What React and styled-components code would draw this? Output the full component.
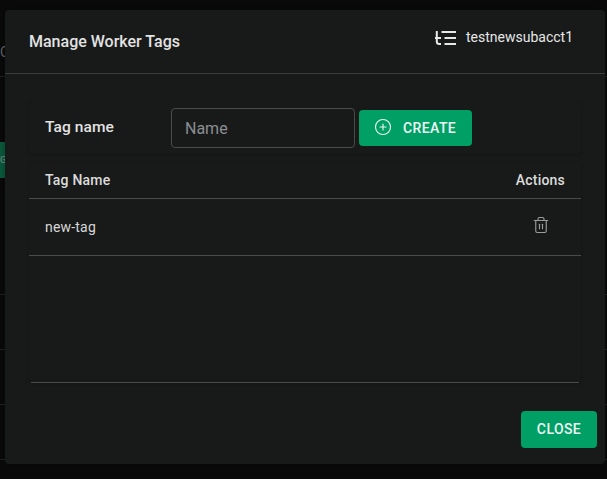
import React from "react";
import styled, { createGlobalStyle } from "styled-components";
import { Trash2, CirclePlus } from "lucide-react";

const Global = createGlobalStyle`
  html, body { margin: 0; padding: 0; background: #0a0a0a; }
  body { font-family: Roboto, "Liberation Sans", sans-serif; overflow: hidden; }
`;

const Page = styled.div`
  position: relative;
  width: 607px;
  height: 479px;
  overflow: hidden;
  background: #0a0a0a;
`;

const Backdrop = styled.div`
  display: flex;
  flex-direction: column;
  height: 100%;
  padding-top: 40px;
  box-sizing: border-box;
`;

const BackHeading = styled.div`
  height: 37px;
  box-sizing: border-box;
  border-bottom: 1px solid #232525;
  color: #6a6c6c;
  font-size: 14px;
  line-height: 24px;
  white-space: nowrap;
`;

const BackToolbar = styled.div`
  display: flex;
  padding-top: 65px;
  height: 218px;
  box-sizing: border-box;
  border-bottom: 1px solid #232525;
`;

const BackButton = styled.div`
  width: 5px;
  height: 36px;
  background: #0b5f41;
  color: #6f8f82;
  font-size: 9px;
  font-weight: 500;
  line-height: 36px;
  overflow: hidden;
`;

const BackRow = styled.div`
  flex: none;
  height: 55px;
  box-sizing: border-box;
  border-bottom: 1px solid #232525;
`;

const Modal = styled.div`
  position: absolute;
  left: 5px;
  top: 10px;
  width: 600px;
  height: 454px;
  background: #181a1a;
  border-radius: 4px;
  display: flex;
  flex-direction: column;
  box-shadow: 0 0 12px rgba(0, 0, 0, 0.4);
`;

const Header = styled.header`
  flex: none;
  height: 64px;
  box-sizing: border-box;
  border-bottom: 1px solid #3a3c3c;
  display: flex;
  justify-content: space-between;
  padding: 0 32px 0 24px;
`;

const Title = styled.h2`
  margin: 0;
  font-size: 16px;
  font-weight: 500;
  line-height: 63px;
  color: #e2e2e2;
`;

const Account = styled.div`
  display: flex;
  align-items: center;
  gap: 10px;
  height: 55px;
  color: #e6e6e6;
  font-size: 14px;
  font-weight: 400;
`;

const AccountName = styled.span`
  line-height: 20px;
  margin-top: -1px;
`;

const Body = styled.div`
  flex: 1;
  display: flex;
  flex-direction: column;
  gap: 8px;
  padding: 28px 24px 0;
`;

const FormCard = styled.div`
  flex: none;
  height: 52px;
  box-sizing: border-box;
  border-radius: 4px;
  background: #181a1a;
  box-shadow: 0 1px 3px rgba(0, 0, 0, 0.25);
  display: flex;
  align-items: center;
  padding: 0 16px;
`;

const FieldLabel = styled.label`
  width: 126px;
  flex: none;
  font-size: 15.5px;
  font-weight: 500;
  letter-spacing: 0.1px;
  color: #e2e2e2;
  position: relative;
  top: -1px;
`;

const NameInput = styled.input`
  width: 184px;
  height: 40px;
  box-sizing: border-box;
  background: transparent;
  border: 1px solid #4a4c4c;
  border-radius: 4px;
  padding: 0 13px;
  font-family: inherit;
  font-size: 16px;
  color: #e8e8e8;
  outline: none;
  &::placeholder { color: #8b8e92; opacity: 1; }
`;

const GreenButton = styled.button`
  border: none;
  border-radius: 4px;
  background: #009f65;
  color: #eef8f4;
  font-family: inherit;
  font-size: 14px;
  font-weight: 500;
  letter-spacing: 0.4px;
  display: inline-flex;
  align-items: center;
  padding: 0;
`;

const CreateButton = styled(GreenButton)`
  width: 113px;
  height: 36px;
  margin-left: 4px;
  padding-left: 15px;
  gap: 11px;
`;

const CreateIcon = styled(CirclePlus)`
  margin-top: -3px;
`;

const CloseButton = styled(GreenButton)`
  width: 76px;
  height: 37px;
  justify-content: center;
  padding-bottom: 2px;
`;

const TableCard = styled.div`
  flex: none;
  height: 221px;
  box-sizing: border-box;
  border-radius: 4px;
  background: #181a1a;
  box-shadow: 0 1px 3px rgba(0, 0, 0, 0.25);
  display: flex;
  flex-direction: column;
`;

const Row = styled.div`
  flex: none;
  display: flex;
  align-items: center;
  justify-content: space-between;
  box-sizing: border-box;
  height: ${(p) => p.$h}px;
  border-bottom: 1px solid #4a4c4c;
  padding: 0 16px;
  font-size: 14px;
  letter-spacing: 0.2px;
  font-weight: ${(p) => (p.$head ? 500 : 400)};
  color: ${(p) => (p.$head ? "#dcdcdc" : "#d8d8d8")};
`;

const ActionCell = styled.span`
  width: 47px;
  display: flex;
  justify-content: center;
  color: #9a9c9c;
  position: relative;
  top: -2px;
  left: -1px;
`;

const TableEnd = styled.div`
  margin: auto 2px 0;
  height: 1px;
  background: #4a4c4c;
`;

const Footer = styled.footer`
  flex: 1;
  display: flex;
  justify-content: flex-end;
  align-items: flex-start;
  padding: 28px 8px 0 0;
`;

const LogoMark = () => (
  <svg width="21" height="14" viewBox="0 0 21 14" fill="none" stroke="#e8e8e8" strokeWidth="2">
    <path d="M1.800 0v10.500q0 2.500 2.500 2.500H6" />
    <path d="M0 7h6" />
    <path d="M6.500 1H21M9.500 7H21M9.500 13H21" />
  </svg>
);

export default function App() {
  return (
    <Page>
      <Global />
      <Backdrop>
        <BackHeading>C</BackHeading>
        <BackToolbar>
          <BackButton>G</BackButton>
        </BackToolbar>
        <BackRow />
        <BackRow />
        <BackRow />
      </Backdrop>
      <Modal>
        <Header>
          <Title>Manage Worker Tags</Title>
          <Account>
            <LogoMark />
            <AccountName>testnewsubacct1</AccountName>
          </Account>
        </Header>
        <Body>
          <FormCard>
            <FieldLabel>Tag name</FieldLabel>
            <NameInput placeholder="Name" />
            <CreateButton>
              <CreateIcon size={18} strokeWidth={1.5} />
              CREATE
            </CreateButton>
          </FormCard>
          <TableCard>
            <Row $h={37} $head>
              <span>Tag Name</span>
              <span>Actions</span>
            </Row>
            <Row $h={57}>
              <span>new-tag</span>
              <ActionCell>
                <Trash2 size={18} strokeWidth={1.5} />
              </ActionCell>
            </Row>
            <TableEnd />
          </TableCard>
        </Body>
        <Footer>
          <CloseButton>CLOSE</CloseButton>
        </Footer>
      </Modal>
    </Page>
  );
}
